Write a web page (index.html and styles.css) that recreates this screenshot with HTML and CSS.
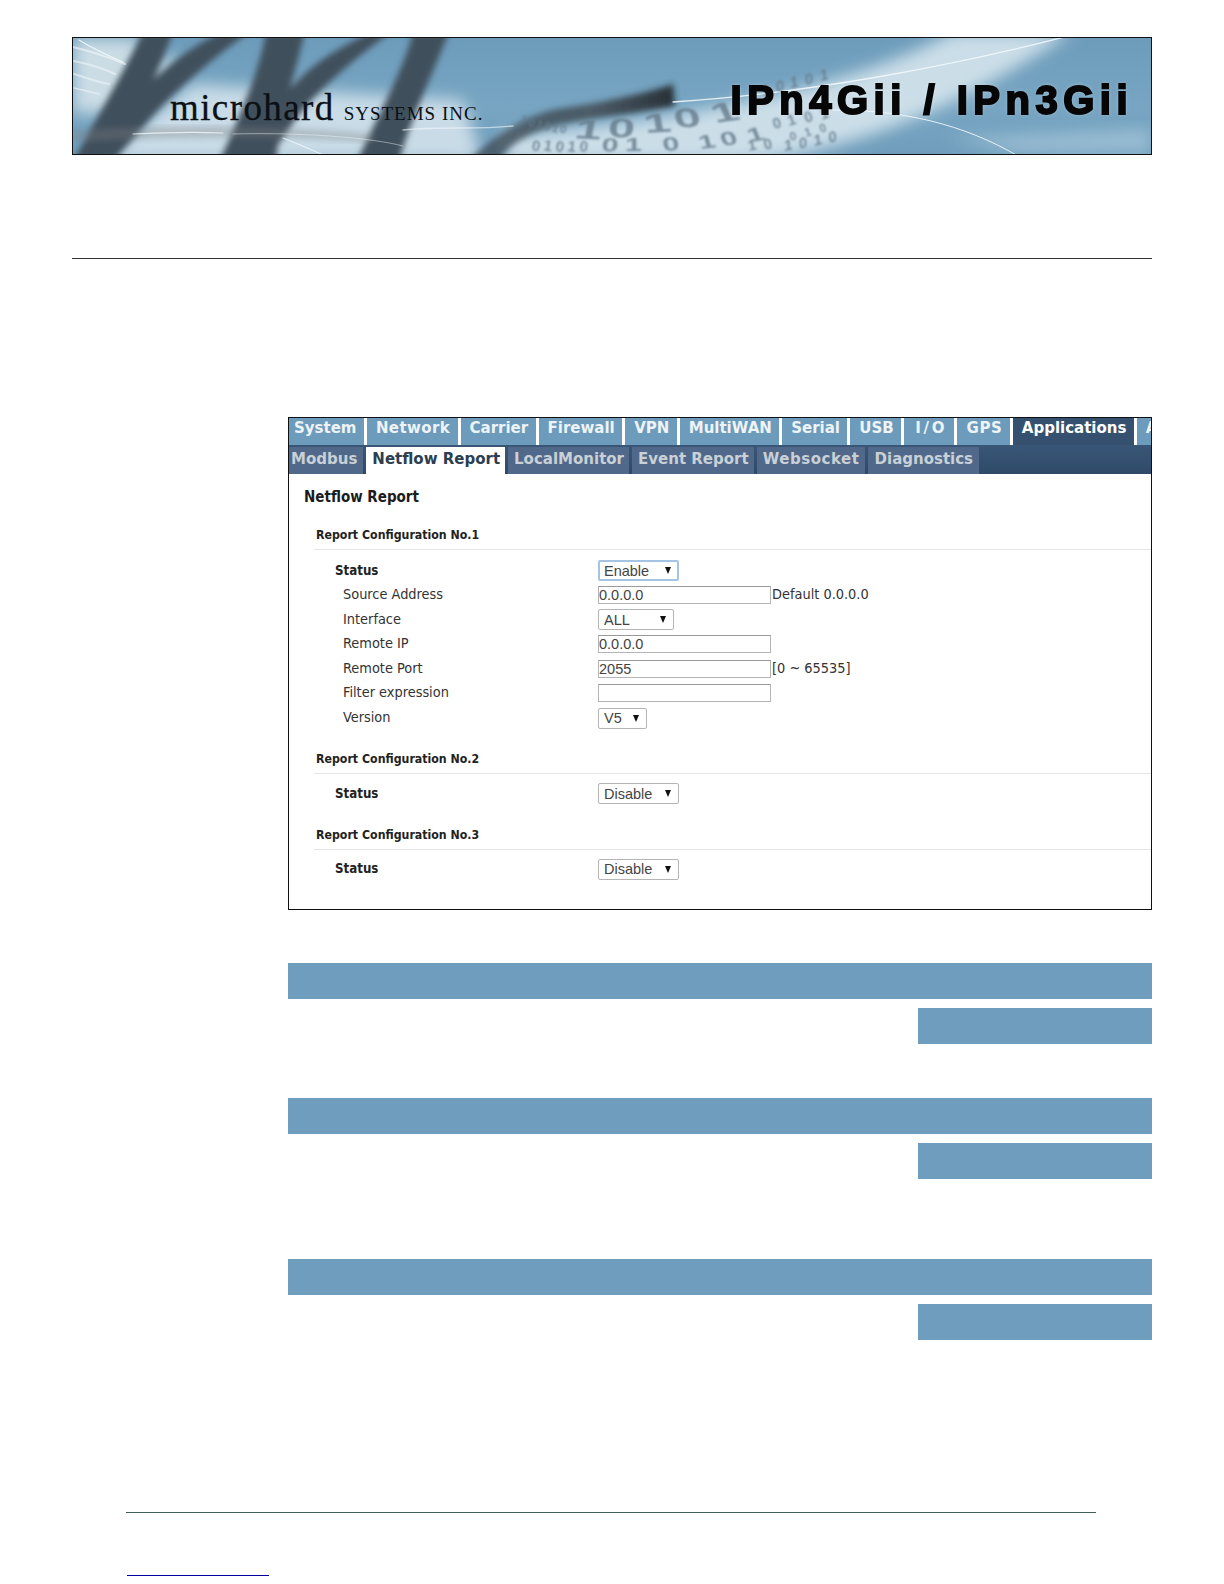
FILE: index.html
```html
<!DOCTYPE html>
<html lang="en">
<head>
<meta charset="utf-8">
<title>Netflow Report</title>
<link rel="stylesheet" href="styles.css">
</head>
<body>
<div class="page">
  <header class="banner">
    <svg class="banner-art" viewBox="0 0 1078 116" preserveAspectRatio="none" aria-hidden="true">
      <defs>
        <linearGradient id="sky" x1="0" y1="0" x2="0" y2="1">
          <stop offset="0" stop-color="#6d9cbb"/>
          <stop offset="0.6" stop-color="#77a5c2"/>
          <stop offset="1" stop-color="#6f9dbb"/>
        </linearGradient>
        <linearGradient id="streak" x1="0" y1="0" x2="1" y2="0">
          <stop offset="0" stop-color="#3c4a55" stop-opacity="0.75"/>
          <stop offset="0.6" stop-color="#46535c" stop-opacity="0.9"/>
          <stop offset="1" stop-color="#272f35"/>
        </linearGradient>
        <filter id="b05"><feGaussianBlur stdDeviation="0.5"/></filter>
        <filter id="b08"><feGaussianBlur stdDeviation="0.8"/></filter>
        <filter id="b3" x="-10%" y="-10%" width="120%" height="120%"><feGaussianBlur stdDeviation="3"/></filter>
        <filter id="b8" x="-20%" y="-30%" width="140%" height="160%"><feGaussianBlur stdDeviation="8"/></filter>
      </defs>
      <rect width="1078" height="116" fill="url(#sky)"/>
      <path d="M0 0 L70 0 L55 75 L0 75 Z" fill="#dbe7ec" opacity=".85" filter="url(#b8)"/>
      <path d="M70 20 L110 20 L70 70 L40 60 Z" fill="#e3edf1" opacity=".7" filter="url(#b8)"/>
      <path d="M120 46 L390 62 L410 124 L20 124 Z" fill="#d8e6ee" opacity=".85" filter="url(#b8)"/>
      <path d="M430 96 C560 88 760 60 880 -6 L1000 -6 C900 60 800 108 680 124 L430 124 Z" fill="#dbe9f0" opacity=".85" filter="url(#b8)"/>
      <path d="M870 100 L1078 90 L1078 116 L950 116 Z" fill="#a9c9dc" opacity=".7" filter="url(#b8)"/>
      <g fill="#414f5b" filter="url(#b3)">
        <path d="M70 -6 L100 -6 C88 30 62 80 42 124 L0 124 C22 82 52 32 70 -6 Z"/>
        <path d="M148 -6 L176 -6 C140 20 105 50 78 80 C64 96 50 112 40 124 L18 124 C38 88 66 52 96 28 C112 14 130 3 148 -6 Z"/>
        <path d="M193 -6 L232 -6 C222 35 206 85 203 124 L146 124 C166 80 186 35 193 -6 Z"/>
        <path d="M298 -6 L318 -6 C280 22 240 55 218 88 C208 102 200 114 194 124 L170 124 C186 86 205 60 236 32 C256 15 278 4 298 -6 Z"/>
        <path d="M340 -6 L376 -6 C360 35 336 85 326 124 L284 124 C302 82 330 35 340 -6 Z"/>
      </g>
      <path d="M0 92 C110 86 210 88 300 96 L300 104 C200 98 100 98 0 104 Z" fill="#7b7f82" opacity=".35" filter="url(#b3)"/>
      <path d="M395 124 C420 96 460 74 490 70 C530 64 570 56 600 46 L602 68 C560 76 520 80 490 86 C460 92 435 106 425 124 Z" fill="url(#streak)" filter="url(#b3)"/>
      <g fill="none" stroke="#f2f8fb" stroke-linecap="round">
        <path d="M6 2 C22 12 36 18 50 24" stroke-width="1.2" opacity=".9"/>
        <path d="M0 9 C20 14 38 20 52 26" stroke-width="2" opacity=".6" filter="url(#b05)"/>
        <path d="M1 23 C15 26 30 30 42 36" stroke-width="2" opacity=".55" filter="url(#b05)"/>
        <path d="M1 36 C14 40 24 44 36 46" stroke-width="2" opacity=".55" filter="url(#b05)"/>
        <path d="M1 50 C10 52 18 54 26 56" stroke-width="1.5" opacity=".6" filter="url(#b05)"/>
        <path d="M60 96 C100 94 125 94 150 95" stroke-width="1.2" opacity=".8"/>
        <path d="M210 100 C225 106 240 112 252 118" stroke-width="1.1" opacity=".8"/>
        <path d="M160 96 C230 94 300 100 330 108" stroke-width="1" opacity=".45"/>
        <path d="M330 92 C370 88 400 92 440 88" stroke-width="1.4" opacity=".6" filter="url(#b05)"/>
        <path d="M600 64 C730 56 880 28 995 -2" stroke-width="1.3" opacity=".9"/>
        <path d="M760 72 C830 72 890 86 945 118" stroke-width="1" opacity=".9"/>
      </g>
      <g class="digits" filter="url(#b08)">
        <text class="d-xs" x="446 454 462 470 478 486" y="84 87 89 91 93 94" rotate="25 25 22 20 18 15">101010</text>
        <g transform="scale(1.8 1)">
          <text class="d-lg" x="278 297 318 335 357" y="100 99 95 90 85" rotate="6 2 -6 -8 -14">10101</text>
        </g>
        <g transform="scale(1.6 1)">
          <text class="d-md" x="330 345 369 392 406 423" y="113 113 113 111 108 104" rotate="4 0 -6 -10 -12 -14">010101</text>
        </g>
        <text class="d-sm" x="458 470 482 494 506" y="112 112 113 113 113" rotate="12 10 10 8 8">01010</text>
        <text class="d-sm" x="701 716 733 749" y="91 88 85 82" rotate="-14 -16 -18 -20">0101</text>
        <text class="d-sm" x="676 692" y="113 112" rotate="-12 -14">10</text>
        <text class="d-xs" x="718 733 748" y="103 99 95" rotate="-16 -18 -20">010</text>
        <text class="d-it" x="712 727 742 757" y="113 111 108 105" rotate="-12 -14 -16 -18">1010</text>
        <text class="d-it" x="690 704 718 733 748" y="58 54 50 47 43" rotate="-14 -14 -14 -14 -14">10101</text>
      </g>
    </svg>
    <div class="brand"><span class="brand-name">microhard</span><span class="brand-sub">SYSTEMS INC.</span></div>
    <div class="model">IPn4Gii / IPn3Gii</div>
  </header>

  <hr class="page-rule">

  <main class="content">
    <section class="panel">
      <nav class="tabs">
        <a class="tab">System</a>
        <a class="tab tab-net">Network</a>
        <a class="tab">Carrier</a>
        <a class="tab">Firewall</a>
        <a class="tab">VPN</a>
        <a class="tab">MultiWAN</a>
        <a class="tab">Serial</a>
        <a class="tab">USB</a>
        <a class="tab tab-wide">I/O</a>
        <a class="tab tab-gps">GPS</a>
        <a class="tab tab-on">Applications</a>
        <a class="tab">Admin</a>
      </nav>
      <nav class="subtabs">
        <a class="subtab subtab-first">Modbus</a>
        <a class="subtab subtab-on">Netflow Report</a>
        <a class="subtab">LocalMonitor</a>
        <a class="subtab">Event Report</a>
        <a class="subtab subtab-wide">Websocket</a>
        <a class="subtab">Diagnostics</a>
      </nav>
      <div class="panel-body">
        <h1 class="panel-title">Netflow Report</h1>

        <h2 class="group-title">Report Configuration No.1</h2>
        <div class="form-rows">
          <div class="row">
            <span class="label label-strong">Status</span>
            <span class="select select-focus select-w81"><span>Enable</span><i class="arrow"></i></span>
          </div>
          <div class="row">
            <span class="label">Source Address</span>
            <input class="field" value="0.0.0.0"><span class="hint">Default 0.0.0.0</span>
          </div>
          <div class="row">
            <span class="label">Interface</span>
            <span class="select select-w76"><span>ALL</span><i class="arrow"></i></span>
          </div>
          <div class="row">
            <span class="label">Remote IP</span>
            <input class="field" value="0.0.0.0">
          </div>
          <div class="row">
            <span class="label">Remote Port</span>
            <input class="field" value="2055"><span class="hint">[0 ~ 65535]</span>
          </div>
          <div class="row">
            <span class="label">Filter expression</span>
            <input class="field" value="">
          </div>
          <div class="row">
            <span class="label">Version</span>
            <span class="select select-w49"><span>V5</span><i class="arrow"></i></span>
          </div>
        </div>

        <h2 class="group-title">Report Configuration No.2</h2>
        <div class="form-rows form-rows-tight">
          <div class="row">
            <span class="label label-strong">Status</span>
            <span class="select select-w81"><span>Disable</span><i class="arrow"></i></span>
          </div>
        </div>

        <h2 class="group-title">Report Configuration No.3</h2>
        <div class="form-rows form-rows-tight">
          <div class="row">
            <span class="label label-strong">Status</span>
            <span class="select select-w81"><span>Disable</span><i class="arrow"></i></span>
          </div>
        </div>
      </div>
    </section>

    <div class="bar bar-first"></div>
    <div class="bar bar-short"></div>
    <div class="bar bar-second"></div>
    <div class="bar bar-short"></div>
    <div class="bar bar-third"></div>
    <div class="bar bar-short"></div>
  </main>

  <footer class="footer">
    <div class="footer-rule"></div>
    <div class="footer-link"></div>
  </footer>
</div>
</body>
</html>
```
FILE: styles.css
```css
* { box-sizing: border-box; }
html, body { margin: 0; padding: 0; background: #fff; }
body { height: 1584px; overflow: hidden; font-family: "DejaVu Sans", sans-serif; color: #222; }

.page { padding: 37px 72px 0; }

/* banner */
.banner {
  position: relative;
  display: flex;
  justify-content: space-between;
  align-items: flex-start;
  height: 118px;
  border: 1px solid #111;
  overflow: hidden;
  background: #6c9cbc;
}
.banner-art { position: absolute; inset: 0; width: 100%; height: 100%; }
.digits text { font-family: "Liberation Sans", sans-serif; font-weight: 700; fill: #64798a; opacity: .78; }
.digits .d-lg { font-size: 27px; }
.digits .d-md { font-size: 19px; }
.digits .d-sm { font-size: 15px; }
.digits .d-xs { font-size: 12px; }
.digits .d-it { font-size: 15px; font-style: italic; }
.brand {
  position: relative;
  display: flex;
  align-items: baseline;
  gap: 9px;
  margin: 50px 0 0 97px;
  font-family: "Liberation Serif", serif;
  color: #0b1015;
  white-space: nowrap;
}
.brand-name { font-size: 37px; line-height: 40px; letter-spacing: 1.4px; -webkit-text-stroke: .3px #0b1015; }
.brand-sub { font-size: 19px; letter-spacing: 1px; }
.model {
  position: relative;
  margin: 40px 18px 0 0;
  font-family: "Liberation Sans", sans-serif;
  font-weight: 700;
  font-size: 40px;
  line-height: 44px;
  letter-spacing: 5.5px;
  color: #060606;
  -webkit-text-stroke: 2px #060606;
  text-shadow: 0 0 5px rgba(255,255,255,.4);
  white-space: nowrap;
}

.page-rule { margin: 103px 0 0; border: 0; border-top: 1px solid #333; height: 1px; }

/* main */
.content { margin: 158px 0 0 216px; display: flex; flex-direction: column; }

.panel {
  height: 493px;
  border: 1px solid #111;
  overflow: hidden;
  background: #fff;
}
.tabs {
  display: flex;
  height: 27px;
  background: #6c9bbb;
  white-space: nowrap;
  overflow: hidden;
}
.tab {
  flex: none;
  padding: 0 7.4px 0 5px;
  border-right: 3px solid #fff;
  font-weight: 700;
  font-size: 15px;
  line-height: 20px;
  color: #eef3f6;
  background: #6c9bbb;
}
.tab + .tab { padding-left: 9px; }
.tab-net { letter-spacing: .4px; }
.tab + .tab-wide { padding-left: 11px; letter-spacing: 2.7px; }
.tab-gps { letter-spacing: .6px; }
.tab-on { background: #36516f; color: #fff; }
.subtabs {
  display: flex;
  gap: 3px;
  height: 29px;
  padding-top: 2px;
  background: linear-gradient(#3a5676, #2f4a69);
  white-space: nowrap;
}
.subtab {
  flex: none;
  padding: 0 5px 0 6px;
  font-weight: 700;
  font-size: 15px;
  line-height: 25px;
  color: #c9d0d6;
  background: #50698a;
}
.subtab:last-child { padding: 0 6px 0 7px; }
.subtab-first { padding: 0 6px 0 2px; }
.subtab-on { background: #fff; color: #2c3e50; }
.subtab-wide { letter-spacing: .55px; }

.panel-body { padding: 0 0 0 15px; }
.panel-title {
  margin: 14px 0 0;
  font-size: 15px;
  line-height: 18px;
  font-weight: 700;
  color: #1c1c1c;
  font-family: "DejaVu Sans Condensed", "DejaVu Sans", sans-serif;
}
.group-title {
  margin: 21px 0 0 10px;
  padding: 0 0 6px 2px;
  border-bottom: 1px solid #e4e4e4;
  font-size: 12.25px;
  line-height: 16px;
  font-weight: 700;
  color: #222;
  font-family: "DejaVu Sans Condensed", "DejaVu Sans", sans-serif;
}
.form-rows { margin: 10px 0 0 0; display: flex; flex-direction: column; gap: 3.6px; }
.form-rows-tight { margin-top: 9px; }
.form-rows + .group-title { margin-top: 22.5px; }
.row {
  display: flex;
  align-items: center;
  height: 21px;
  padding-left: 39px;
  font-family: "DejaVu Sans Condensed", "DejaVu Sans", sans-serif;
  font-size: 14.4px;
  color: #333;
}
.label { flex: none; width: 255px; margin-top: -2px; }
.label-strong { font-weight: 700; font-size: 13.2px; color: #222; margin: -1px 0 0 -8px; width: 263px; }
.select {
  display: flex;
  align-items: center;
  justify-content: space-between;
  height: 21px;
  padding: 0 7px 0 5px;
  border: 1px solid #b5b5b5;
  border-radius: 2px;
  background: #fff;
  font-family: "Liberation Sans", sans-serif;
  font-size: 14.5px;
  color: #444;
}
.select-focus { border: 2px solid #a5c4e4; padding: 0 6px 0 4px; }
.select-w81 { width: 81px; }
.select-w76 { width: 76px; }
.select-w49 { width: 49px; }
.arrow {
  width: 0;
  height: 0;
  border-left: 3.5px solid transparent;
  border-right: 3.5px solid transparent;
  border-top: 7px solid #111;
}
.field {
  width: 173px;
  height: 18px;
  padding: 0;
  border: 1px solid #b5b5b5;
  border-top-color: #999;
  border-radius: 0;
  outline: none;
  background: #fff;
  font-family: "Liberation Sans", sans-serif;
  font-size: 14.5px;
  color: #444;
}
.hint { margin: -2px 0 0 1px; }

/* blue bars */
.bar { height: 36px; background: #6f9dbd; }
.bar-first { margin-top: 53px; }
.bar-second { margin-top: 54px; }
.bar-third { margin-top: 80px; }
.bar-short { margin-top: 9px; margin-left: 630px; }

/* footer */
.footer { display: flex; flex-direction: column; margin: 172px 56px 0 54px; }
.footer-rule { height: 1px; background: #3f5f5a; }
.footer-link { margin: 62px 0 0 1px; width: 142px; height: 1px; background: #00009c; }
```
